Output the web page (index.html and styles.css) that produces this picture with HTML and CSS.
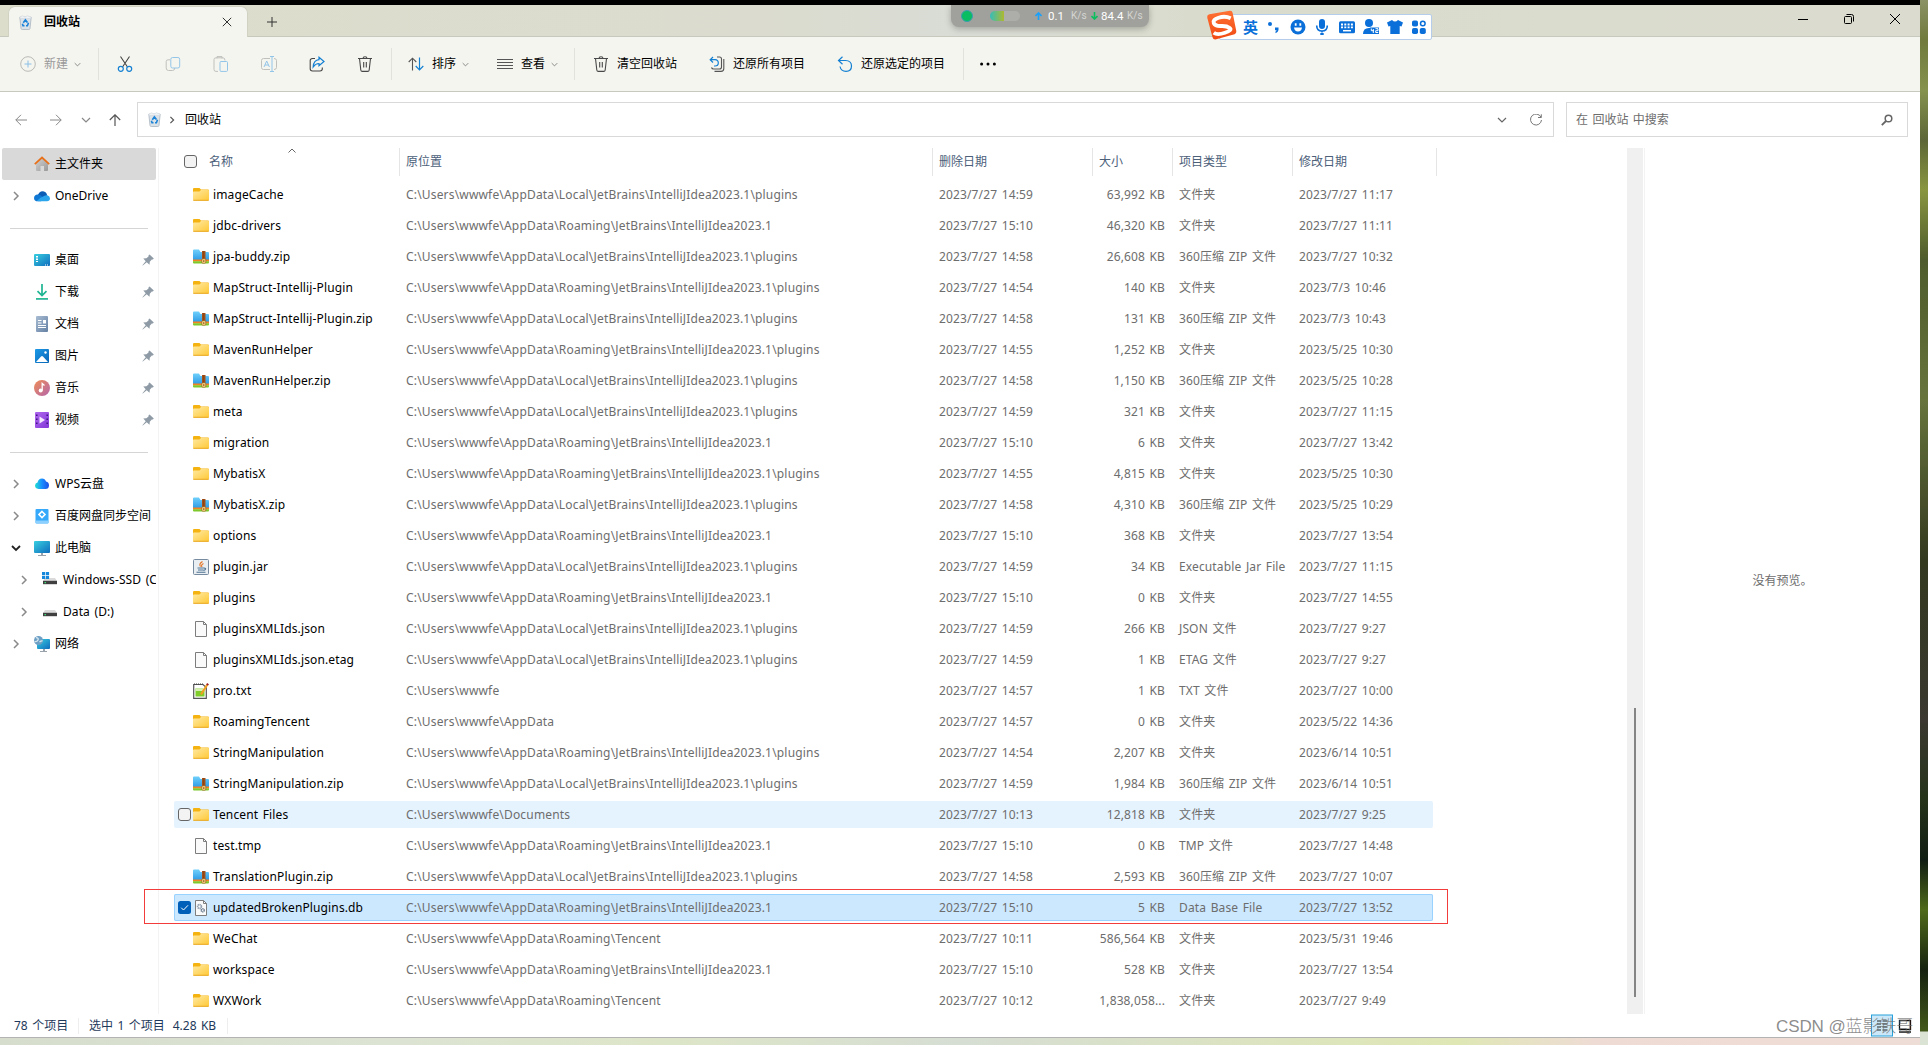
FILE: index.html
```html
<!DOCTYPE html>
<html lang="zh-CN">
<head>
    <meta charset="UTF-8">
    <title>回收站</title>
    <link rel="stylesheet" href="styles.css">
</head>
<body>
<svg class="sprite" xmlns="http://www.w3.org/2000/svg">
    <defs>
        <linearGradient id="gFolder" x1="0" y1="0" x2="1" y2="1"><stop offset="0" stop-color="#ffe9a2"/><stop offset="1" stop-color="#ffc937"/></linearGradient>
        <linearGradient id="gZip" x1="0" y1="0" x2="0" y2="1"><stop offset="0" stop-color="#6fd0fb"/><stop offset="1" stop-color="#2e9be6"/></linearGradient>
        <linearGradient id="gScreen" x1="0" y1="0" x2="1" y2="1"><stop offset="0" stop-color="#38cfe0"/><stop offset="1" stop-color="#0f6cbd"/></linearGradient>
        <linearGradient id="gDown" x1="0" y1="0" x2="0" y2="1"><stop offset="0" stop-color="#35cf8e"/><stop offset="1" stop-color="#109a94"/></linearGradient>
        <linearGradient id="gDoc" x1="0" y1="0" x2="1" y2="1"><stop offset="0" stop-color="#a9bdd3"/><stop offset="1" stop-color="#6480a3"/></linearGradient>
        <linearGradient id="gPic" x1="0" y1="0" x2="1" y2="1"><stop offset="0" stop-color="#1c9be8"/><stop offset="1" stop-color="#0864b5"/></linearGradient>
        <linearGradient id="gMusic" x1="0" y1="0" x2="1" y2="1"><stop offset="0" stop-color="#ef8d56"/><stop offset="1" stop-color="#b466ac"/></linearGradient>
        <linearGradient id="gVideo" x1="0" y1="0" x2="1" y2="1"><stop offset="0" stop-color="#b067ee"/><stop offset="1" stop-color="#8138d8"/></linearGradient>
        <linearGradient id="gHome" x1="0" y1="0" x2="1" y2="1"><stop offset="0" stop-color="#d2d2d2"/><stop offset="1" stop-color="#999"/></linearGradient>
        <linearGradient id="gWps" x1="0" y1="0" x2="1" y2="0"><stop offset="0" stop-color="#1fe0d0"/><stop offset=".5" stop-color="#1a8dff"/><stop offset="1" stop-color="#1d4fe6"/></linearGradient>
        <linearGradient id="gSogou" x1="0" y1="0" x2="0" y2="1"><stop offset="0" stop-color="#ff7033"/><stop offset="1" stop-color="#f04a12"/></linearGradient>
    </defs>

    <!-- file types -->
    <symbol id="folder" viewBox="0 0 16 16">
        <path d="M0 2Q0 1 1 1H6.500L8 2.500H15Q16 2.500 16 3.500V8H0Z" fill="#f5b312"/>
        <path d="M0 5.500Q0 4.500 1 4.500H6.500L8 3H15.200Q16 3 16 4V12.500Q16 13.500 15 13.500H1Q0 13.500 0 12.500Z" fill="url(#gFolder)"/>
        <path d="M.3 13.300h15.400" stroke="#e8a71d"/>
    </symbol>
    <symbol id="zip" viewBox="0 0 16 16">
        <path d="M0 1.500Q0 .5 1 .5H6L7.500 3H15Q16 3 16 4V11H0Z" fill="url(#gZip)"/>
        <path d="M0 10.500h16v2H0z" fill="#f58220"/>
        <path d="M0 12.300h16V13.500q0 1-1 1H1q-1 0-1-1z" fill="#7fc82b"/>
        <path d="M9 2h3.500v12H9z" fill="#a5521a"/>
        <path d="M10.700 2.500v8" stroke="#6d300b" stroke-dasharray="1 1"/>
        <rect x="8.800" y="9.800" width="4" height="4.400" rx="1" fill="#ffe08a" stroke="#8b4a14" stroke-width=".6"/>
        <rect x="10.200" y="11.300" width="1.200" height="1.500" fill="#7a3b0c"/>
    </symbol>
    <symbol id="file" viewBox="0 0 16 16">
        <path d="M2.500.5H10.500L13.500 3.500V15.500H2.500Z" fill="#fafafa" stroke="#7d7d7d"/>
        <path d="M10.500.5V3.500H13.500" fill="none" stroke="#7d7d7d"/>
    </symbol>
    <symbol id="db" viewBox="0 0 16 16">
        <path d="M2.500.5H10.500L13.500 3.500V15.500H2.500Z" fill="#fafafa" stroke="#7d7d7d"/>
        <path d="M10.500.5V3.500H13.500" fill="none" stroke="#7d7d7d"/>
        <circle cx="6.500" cy="6.500" r="1.900" fill="none" stroke="#94a2b2" stroke-width="1.700" stroke-dasharray="1.200 .4"/>
        <circle cx="9.700" cy="10.300" r="1.500" fill="none" stroke="#6f7f92" stroke-width="1.500" stroke-dasharray="1.100 .4"/>
    </symbol>
    <symbol id="jar" viewBox="0 0 16 16">
        <rect x=".5" y=".5" width="15" height="15" rx="1" fill="#e9eef3" stroke="#768b9f"/>
        <path d="M9.500 2.500Q5.500 5 7.500 7.500M10.500 4.500Q7.500 6 9 8" fill="none" stroke="#e5792b" stroke-width="1.200"/>
        <path d="M4.500 9h6.500M5 11h5.500M3.500 13.200h9M11 9.200q2.200-.2 1.500 1t-2 1" fill="none" stroke="#4e7391" stroke-width="1.100"/>
    </symbol>
    <symbol id="txt" viewBox="0 0 16 16">
        <path d="M.7 1.500H10L13.300 4.500V15.300H.7Z" fill="#fff" stroke="#555" stroke-width="1.200"/>
        <path d="M1 1h9" stroke="#444" stroke-dasharray="1 1"/>
        <path d="M2.500 5.500H10L11.500 8V13.500H2.500Z" fill="#7fcc2a"/>
        <path d="M2.500 5.500H10V8H2.500Z" fill="#d7f0b0"/>
        <path d="M8 11.500L14 2" stroke="#f0a020" stroke-width="2.200"/>
        <path d="M14 2.200L15 .7" stroke="#a01c1c" stroke-width="2.200"/>
    </symbol>

    <!-- navigation pane -->
    <symbol id="home" viewBox="0 0 16 16">
        <path d="M2 7.500L8 2L14 7.500V14Q14 15 13 15H10V10H6.500V15H3Q2 15 2 14Z" fill="url(#gHome)"/>
        <path d="M.8 8.200L8 1.500L15.200 8.200" fill="none" stroke="#e8721c" stroke-width="1.800"/>
    </symbol>
    <symbol id="onedrive" viewBox="0 0 16 16">
        <path d="M3.500 8Q5 3 9 3.200Q12.500 3.500 13.200 7.500L8 11Z" fill="#0a5cb5"/>
        <path d="M4 13.300Q0 13.300 0 9.900Q.3 6.800 3.700 6.600Q6.500 6.500 9 9.500L7 13.300Z" fill="#0f78d4"/>
        <path d="M3 12.800Q6 9.500 10 8Q12 7 13.300 7.300Q16 8 16 10.500Q15.800 13.300 13 13.300H4Z" fill="#2aa5ec"/>
    </symbol>
    <symbol id="desktop" viewBox="0 0 16 16">
        <rect y="2" width="16" height="12" rx="1" fill="url(#gScreen)"/>
        <path d="M2 4h2v1.500H2zM2 6.500h2V8H2zM2 9h2v1H2zM11 12.600h1v1h-1zM13 12.600h1v1h-1z" fill="#fff"/>
    </symbol>
    <symbol id="download" viewBox="0 0 16 16">
        <path d="M8 0V11M3.500 7.200L8 11.600L12.500 7.200" fill="none" stroke="#1fb592" stroke-width="1.700"/>
        <path d="M2 14h12v1.700H2z" fill="url(#gDown)"/>
    </symbol>
    <symbol id="document" viewBox="0 0 16 16">
        <rect x="2" width="12" height="16" rx="1" fill="url(#gDoc)"/>
        <path d="M4 4.500h3.500M4 7h3.500M4 9.500h8M4 11.500h8" stroke="#fff" stroke-width="1.100"/>
        <path d="M9 4h3v3.500H9z" fill="#fff"/>
    </symbol>
    <symbol id="picture" viewBox="0 0 16 16">
        <rect x="1" y="1" width="14" height="14" rx="1" fill="url(#gPic)"/>
        <path d="M2 14L7 8.500Q8 7.500 9 8.500L14 14Z" fill="#fff"/>
        <circle cx="11.500" cy="4.500" r="1.200" fill="#fff"/>
    </symbol>
    <symbol id="music" viewBox="0 0 16 16">
        <circle cx="8" cy="8" r="8" fill="url(#gMusic)"/>
        <circle cx="6.700" cy="10.500" r="2" fill="#fff"/>
        <path d="M8.200 10.500V3.500L10.500 5.500" fill="none" stroke="#fff" stroke-width="1.300"/>
    </symbol>
    <symbol id="video" viewBox="0 0 16 16">
        <rect x="1" width="14" height="16" rx="1" fill="url(#gVideo)"/>
        <path d="M2.800 2.500v12M13.200 2.500v12" stroke="#3d1480" stroke-width="1.500" stroke-dasharray="1.500 2.500"/>
        <path d="M5.500 4.500L11 8L5.500 11.500Z" fill="#f3e8ff"/>
    </symbol>
    <symbol id="wps" viewBox="0 0 16 16">
        <path d="M4.500 13Q1 12.500 1 9.500Q1.200 7 3.500 6.500Q4.500 2.500 8 2.500Q11 2.500 12 5.500Q15 6.200 15 9.500Q14.800 13 11.500 13Z" fill="url(#gWps)"/>
    </symbol>
    <symbol id="baidu" viewBox="0 0 16 16">
        <rect x="1.500" y="1" width="13" height="14.500" rx="1" fill="#36a9fb"/>
        <path d="M1.500 12.500h13V15h-13z" fill="#8bd0ff"/>
        <path d="M8 3.500L11 6.500L8 9.500L5 6.500Z" fill="none" stroke="#fff" stroke-width="1.600"/>
    </symbol>
    <symbol id="pc" viewBox="0 0 16 16">
        <rect y="1" width="16" height="12" rx="1" fill="url(#gScreen)"/>
        <path d="M7 13h2v2h3v1H4v-1h3z" fill="#9aa3ab"/>
    </symbol>
    <symbol id="disk" viewBox="0 0 16 16">
        <path d="M3 6h10l2 3H1z" fill="#dadada"/>
        <path d="M1 8.800h14v3.400H1z" fill="#3f3f3f"/>
        <path d="M2.500 10h1.500v1.200H2.500z" fill="#3fdc7a"/>
    </symbol>
    <symbol id="ssd" viewBox="0 0 16 16">
        <path d="M3 6h10l2 3H1z" fill="#dadada"/>
        <path d="M1 8.800h14v3.400H1z" fill="#3f3f3f"/>
        <path d="M2.500 10h1.500v1.200H2.500z" fill="#3fdc7a"/>
        <path d="M0 0h3.200v3.200H0zM3.900 0h3.200v3.200H3.900zM0 3.900h3.200v3.200H0zM3.900 3.900h3.200v3.200H3.900z" fill="#1588dc"/>
    </symbol>
    <symbol id="network" viewBox="0 0 16 16">
        <rect x="3" y="3" width="13" height="10" rx="1" fill="url(#gScreen)"/>
        <path d="M9 13h2v2h2v1H6v-1h3z" fill="#9aa3ab"/>
        <circle cx="4.500" cy="4.500" r="4.500" fill="#6d9fc4"/>
        <path d="M2 1.500q3 .5 2 2.500t-3.500 1.500M5.500 6q2-1.500 3-1" fill="none" stroke="#d5e6ef" stroke-width="1.400"/>
    </symbol>
    <symbol id="pin" viewBox="0 0 12 12">
        <path d="M7.500 .5L11.800 4.500L10.800 5.500L9.800 5.500L7.800 7.800L7.500 10.700L4.700 8.300L.8 11.600L.4 11.200L3.700 7.300L1.300 4.600L4.400 4.200L6.500 2.500L6.500 1.500Z" fill="#8e9aa5"/>
    </symbol>
    <symbol id="bin" viewBox="0 0 13 15">
        <path d="M.8 2.200H12.200L11 13.500Q10.800 14.500 9.800 14.500H3.200Q2.200 14.500 2 13.500Z" fill="#dbe2e8" stroke="#aab5bf" stroke-width=".8"/>
        <path d="M1 2L3.500 .8L6 2L8.500 .7L12 2.200V3.500H1Z" fill="#eef2f5" stroke="#cdd3d8" stroke-width=".5"/>
        <path d="M4.300 7.700L6.400 4.900L8.400 7.500M9.500 7.700L8.400 10.700H7M5.500 10.700H4L3.400 8.700" fill="none" stroke="#1b83d8" stroke-width="1.600"/>
    </symbol>

    <!-- line icons -->
    <symbol id="right" viewBox="0 0 10 10"><path d="M3 1L7 5L3 9" fill="none" stroke="currentColor" stroke-width="1.500"/></symbol>
    <symbol id="down" viewBox="0 0 10 10"><path d="M1 3L5 7L9 3" fill="none" stroke="currentColor" stroke-width="1.200"/></symbol>
    <symbol id="trash" viewBox="0 0 16 16">
        <path d="M1 2.500H15M6 2.500Q6 .7 8 .7T10 2.500M2.500 2.500L3.800 14Q4 15.400 5.300 15.400H10.700Q12 15.400 12.200 14L13.500 2.500M6.700 6V11.500M9.300 6V11.500" fill="none" stroke="#484848" stroke-width="1.100"/>
    </symbol>
</svg>

<div class="desktop">
    <div class="window">
        <header class="titlebar">
            <div class="tab">
                <svg class="tab-icon"><use href="#bin"/></svg>
                <span class="tab-title">回收站</span>
                <svg class="tab-close" viewBox="0 0 10 10"><path d="M.8.8L9.200 9.200M9.200.8L.8 9.200" stroke="#333"/></svg>
            </div>
            <svg class="new-tab" viewBox="0 0 10 10"><path d="M5 0V10M0 5H10" stroke="#333"/></svg>
            <div class="controls">
                <svg viewBox="0 0 10 10"><path d="M0 5.500H10" stroke="#000"/></svg>
                <svg viewBox="0 0 10 10"><path d="M.5 3.500Q.5 2.500 1.500 2.500H6.500Q7.500 2.500 7.500 3.500V8.500Q7.500 9.500 6.500 9.500H1.500Q.5 9.500.5 8.500ZM2.500.5H7.500Q9.500.5 9.500 2.500V7.500" fill="none" stroke="#000"/></svg>
                <svg viewBox="0 0 10 10"><path d="M0 0L10 10M10 0L0 10" stroke="#000"/></svg>
            </div>
        </header>

        <div class="toolbar">
            <div class="tool tool-new disabled">
                <svg viewBox="0 0 16 16"><circle cx="8" cy="8" r="7.300" fill="none" stroke="#b9b9b6"/><path d="M8 4.500V11.500M4.500 8H11.500" stroke="#8cc0e6"/></svg>
                <span>新建</span>
                <svg class="caret"><use href="#down"/></svg>
            </div>
            <i class="sep"></i>
            <div class="icon-tools">
                <svg viewBox="0 0 16 16"><path d="M3.500.5L10.500 11M12.500.5L5.500 11" stroke="#444" stroke-width="1.100"/><circle cx="3.800" cy="12.800" r="2.500" fill="none" stroke="#1480d2" stroke-width="1.200"/><circle cx="12.200" cy="12.800" r="2.500" fill="none" stroke="#1480d2" stroke-width="1.200"/></svg>
                <svg viewBox="0 0 16 16"><path d="M5 3.800H3Q1.200 3.800 1.200 5.500V12Q1.200 14.500 3.500 14.500H7.500Q9.800 14.500 9.800 12" fill="none" stroke="#c0c0bd"/><rect x="5.800" y="1.500" width="8.900" height="10.500" rx="1.800" fill="none" stroke="#93c5e8"/></svg>
                <svg viewBox="0 0 16 16"><path d="M5 15.400H3Q1 15.400 1 13.500V3.500Q1 1.800 3 1.800H10Q12 1.800 12 4.500M4 2.500V.6H9V2.500" fill="none" stroke="#c0c0bd"/><rect x="7" y="5.500" width="7.500" height="9.900" rx="1" fill="none" stroke="#93c5e8"/></svg>
                <svg viewBox="0 0 16 16"><path d="M9 2.500H2.500Q.5 2.500.5 4.500V11.500Q.5 13.500 2.500 13.500H9M13 2.500Q15.500 2.500 15.500 4.500V11.500Q15.500 13.500 13 13.500" fill="none" stroke="#c0c0bd"/><path d="M3 11L5.700 5L8.400 11M4 9H7.500M9 .5H13M11 .5V15.500M9 15.500H13" fill="none" stroke="#93c5e8"/></svg>
                <svg viewBox="0 0 16 16"><path d="M6 2.500H3.500Q1.200 2.500 1.200 4.500V12.800Q1.200 15 3.500 15H11Q13.300 15 13.300 12.800V11.500" fill="none" stroke="#444" stroke-width="1.100"/><path d="M10 1.300L15 5.500L10 9.800V7.500Q6.500 7.500 4.200 10.800Q4.700 4.200 10 3.700Z" fill="none" stroke="#1480d2" stroke-width="1.200"/></svg>
                <svg><use href="#trash"/></svg>
            </div>
            <i class="sep"></i>
            <div class="tool tool-sort">
                <svg viewBox="0 0 16 16"><path d="M4.500 14.500V2.500M.7 6L4.500 2.200L8.300 6" fill="none" stroke="#555" stroke-width="1.100"/><path d="M11.500 1.500V13.500M7.700 10L11.500 13.800L15.300 10" fill="none" stroke="#1480d2" stroke-width="1.200"/></svg>
                <span>排序</span>
                <svg class="caret"><use href="#down"/></svg>
            </div>
            <div class="tool tool-view">
                <svg viewBox="0 0 16 16"><path d="M0 3.500H16M0 6.500H16M0 9.500H16M0 12.500H16" stroke="#555"/></svg>
                <span>查看</span>
                <svg class="caret"><use href="#down"/></svg>
            </div>
            <i class="sep"></i>
            <div class="tool tool-empty">
                <svg><use href="#trash"/></svg>
                <span>清空回收站</span>
            </div>
            <div class="tool tool-all">
                <svg viewBox="0 0 16 16"><path d="M8 1H10.500Q12.500 1 12.500 3V11Q12.500 13 10.500 13H4.500Q3 13 2.500 11.500M14.800 3V12.500Q14.800 15.400 12 15.400H5.500" fill="none" stroke="#555" stroke-width="1.100"/><path d="M1.500 3.700H6Q9.300 4 9.300 7T6 10H5M4 1L1.200 3.700L4 6.500" fill="none" stroke="#1480d2" stroke-width="1.200"/></svg>
                <span>还原所有项目</span>
            </div>
            <div class="tool tool-selected">
                <svg viewBox="0 0 16 16"><path d="M1.500 4.500H8.500Q14.500 4.700 14.500 10T9 15.300Q4 15.300 3 10.500M5.500.8L1.500 4.500L5.500 8.200" fill="none" stroke="#1480d2" stroke-width="1.200"/></svg>
                <span>还原选定的项目</span>
            </div>
            <i class="sep"></i>
            <svg class="more" viewBox="0 0 16 4"><circle cx="1.600" cy="2" r="1.500"/><circle cx="8" cy="2" r="1.500"/><circle cx="14.400" cy="2" r="1.500"/></svg>
        </div>

        <div class="navbar">
            <div class="nav-buttons">
                <svg viewBox="0 0 12 12"><path d="M12 6H.8M6 .8L.8 6L6 11.200" fill="none" stroke="#888"/></svg>
                <svg viewBox="0 0 12 12"><path d="M0 6H11.200M6 .8L11.200 6L6 11.200" fill="none" stroke="#888"/></svg>
                <svg class="recent"><use href="#down"/></svg>
                <svg viewBox="0 0 12 12"><path d="M6 12V.8M.8 6L6 .8L11.200 6" fill="none" stroke="#555" stroke-width="1.200"/></svg>
            </div>
            <div class="address">
                <svg class="address-icon"><use href="#bin"/></svg>
                <svg class="crumb"><use href="#right"/></svg>
                <span>回收站</span>
                <svg class="dropdown"><use href="#down"/></svg>
                <svg class="refresh" viewBox="0 0 12 12"><path d="M11 3.200A5.500 5.500 0 1 0 11.500 6M11.300.3V3.500H8" fill="none" stroke="#777"/></svg>
            </div>
            <div class="search">
                <span>在 回收站 中搜索</span>
                <svg viewBox="0 0 12 12"><circle cx="7.500" cy="4.500" r="3.300" fill="none" stroke="#666" stroke-width="1.500"/><path d="M5 7L.8 11.200" stroke="#666" stroke-width="1.800"/></svg>
            </div>
        </div>

        <main class="content">
            <nav class="sidebar">
                <div class="item active"><i class="arrow"></i><svg class="icon"><use href="#home"/></svg><span>主文件夹</span></div>
                <div class="item"><svg class="arrow"><use href="#right"/></svg><svg class="icon"><use href="#onedrive"/></svg><span>OneDrive</span></div>
                <hr>
                <div class="item"><i class="arrow"></i><svg class="icon"><use href="#desktop"/></svg><span>桌面</span><svg class="pin"><use href="#pin"/></svg></div>
                <div class="item"><i class="arrow"></i><svg class="icon"><use href="#download"/></svg><span>下载</span><svg class="pin"><use href="#pin"/></svg></div>
                <div class="item"><i class="arrow"></i><svg class="icon"><use href="#document"/></svg><span>文档</span><svg class="pin"><use href="#pin"/></svg></div>
                <div class="item"><i class="arrow"></i><svg class="icon"><use href="#picture"/></svg><span>图片</span><svg class="pin"><use href="#pin"/></svg></div>
                <div class="item"><i class="arrow"></i><svg class="icon"><use href="#music"/></svg><span>音乐</span><svg class="pin"><use href="#pin"/></svg></div>
                <div class="item"><i class="arrow"></i><svg class="icon"><use href="#video"/></svg><span>视频</span><svg class="pin"><use href="#pin"/></svg></div>
                <hr>
                <div class="item"><svg class="arrow"><use href="#right"/></svg><svg class="icon"><use href="#wps"/></svg><span>WPS云盘</span></div>
                <div class="item"><svg class="arrow"><use href="#right"/></svg><svg class="icon"><use href="#baidu"/></svg><span>百度网盘同步空间</span></div>
                <div class="item"><svg class="arrow open" viewBox="0 0 10 10"><path d="M1 3L5 7L9 3" fill="none" stroke="#222" stroke-width="1.800"/></svg><svg class="icon"><use href="#pc"/></svg><span>此电脑</span></div>
                <div class="item child"><svg class="arrow"><use href="#right"/></svg><svg class="icon"><use href="#ssd"/></svg><span>Windows-SSD (C:)</span></div>
                <div class="item child"><svg class="arrow"><use href="#right"/></svg><svg class="icon"><use href="#disk"/></svg><span>Data (D:)</span></div>
                <div class="item"><svg class="arrow"><use href="#right"/></svg><svg class="icon"><use href="#network"/></svg><span>网络</span></div>
            </nav>

            <section class="files">
                <div class="head">
                    <div class="head-name"><i class="checkbox"></i>名称<svg class="sorted" viewBox="0 0 8 5"><path d="M.5 4.500L4 1L7.500 4.500" fill="none" stroke="#666"/></svg></div>
                    <div>原位置</div>
                    <div>删除日期</div>
                    <div>大小</div>
                    <div>项目类型</div>
                    <div>修改日期</div>
                </div>
                <div class="row"><b><svg><use href="#folder"/></svg>imageCache</b><span>C:\Users\wwwfe\AppData\Local\JetBrains\IntelliJIdea2023.1\plugins</span><span>2023/7/27 14:59</span><span>63,992 KB</span><span>文件夹</span><span>2023/7/27 11:17</span></div>
                <div class="row"><b><svg><use href="#folder"/></svg>jdbc-drivers</b><span>C:\Users\wwwfe\AppData\Roaming\JetBrains\IntelliJIdea2023.1</span><span>2023/7/27 15:10</span><span>46,320 KB</span><span>文件夹</span><span>2023/7/27 11:11</span></div>
                <div class="row"><b><svg><use href="#zip"/></svg>jpa-buddy.zip</b><span>C:\Users\wwwfe\AppData\Local\JetBrains\IntelliJIdea2023.1\plugins</span><span>2023/7/27 14:58</span><span>26,608 KB</span><span>360压缩 ZIP 文件</span><span>2023/7/27 10:32</span></div>
                <div class="row"><b><svg><use href="#folder"/></svg>MapStruct-Intellij-Plugin</b><span>C:\Users\wwwfe\AppData\Roaming\JetBrains\IntelliJIdea2023.1\plugins</span><span>2023/7/27 14:54</span><span>140 KB</span><span>文件夹</span><span>2023/7/3 10:46</span></div>
                <div class="row"><b><svg><use href="#zip"/></svg>MapStruct-Intellij-Plugin.zip</b><span>C:\Users\wwwfe\AppData\Local\JetBrains\IntelliJIdea2023.1\plugins</span><span>2023/7/27 14:58</span><span>131 KB</span><span>360压缩 ZIP 文件</span><span>2023/7/3 10:43</span></div>
                <div class="row"><b><svg><use href="#folder"/></svg>MavenRunHelper</b><span>C:\Users\wwwfe\AppData\Roaming\JetBrains\IntelliJIdea2023.1\plugins</span><span>2023/7/27 14:55</span><span>1,252 KB</span><span>文件夹</span><span>2023/5/25 10:30</span></div>
                <div class="row"><b><svg><use href="#zip"/></svg>MavenRunHelper.zip</b><span>C:\Users\wwwfe\AppData\Local\JetBrains\IntelliJIdea2023.1\plugins</span><span>2023/7/27 14:58</span><span>1,150 KB</span><span>360压缩 ZIP 文件</span><span>2023/5/25 10:28</span></div>
                <div class="row"><b><svg><use href="#folder"/></svg>meta</b><span>C:\Users\wwwfe\AppData\Local\JetBrains\IntelliJIdea2023.1\plugins</span><span>2023/7/27 14:59</span><span>321 KB</span><span>文件夹</span><span>2023/7/27 11:15</span></div>
                <div class="row"><b><svg><use href="#folder"/></svg>migration</b><span>C:\Users\wwwfe\AppData\Roaming\JetBrains\IntelliJIdea2023.1</span><span>2023/7/27 15:10</span><span>6 KB</span><span>文件夹</span><span>2023/7/27 13:42</span></div>
                <div class="row"><b><svg><use href="#folder"/></svg>MybatisX</b><span>C:\Users\wwwfe\AppData\Roaming\JetBrains\IntelliJIdea2023.1\plugins</span><span>2023/7/27 14:55</span><span>4,815 KB</span><span>文件夹</span><span>2023/5/25 10:30</span></div>
                <div class="row"><b><svg><use href="#zip"/></svg>MybatisX.zip</b><span>C:\Users\wwwfe\AppData\Local\JetBrains\IntelliJIdea2023.1\plugins</span><span>2023/7/27 14:58</span><span>4,310 KB</span><span>360压缩 ZIP 文件</span><span>2023/5/25 10:29</span></div>
                <div class="row"><b><svg><use href="#folder"/></svg>options</b><span>C:\Users\wwwfe\AppData\Roaming\JetBrains\IntelliJIdea2023.1</span><span>2023/7/27 15:10</span><span>368 KB</span><span>文件夹</span><span>2023/7/27 13:54</span></div>
                <div class="row"><b><svg><use href="#jar"/></svg>plugin.jar</b><span>C:\Users\wwwfe\AppData\Local\JetBrains\IntelliJIdea2023.1\plugins</span><span>2023/7/27 14:59</span><span>34 KB</span><span>Executable Jar File</span><span>2023/7/27 11:15</span></div>
                <div class="row"><b><svg><use href="#folder"/></svg>plugins</b><span>C:\Users\wwwfe\AppData\Roaming\JetBrains\IntelliJIdea2023.1</span><span>2023/7/27 15:10</span><span>0 KB</span><span>文件夹</span><span>2023/7/27 14:55</span></div>
                <div class="row"><b><svg><use href="#file"/></svg>pluginsXMLIds.json</b><span>C:\Users\wwwfe\AppData\Local\JetBrains\IntelliJIdea2023.1\plugins</span><span>2023/7/27 14:59</span><span>266 KB</span><span>JSON 文件</span><span>2023/7/27 9:27</span></div>
                <div class="row"><b><svg><use href="#file"/></svg>pluginsXMLIds.json.etag</b><span>C:\Users\wwwfe\AppData\Local\JetBrains\IntelliJIdea2023.1\plugins</span><span>2023/7/27 14:59</span><span>1 KB</span><span>ETAG 文件</span><span>2023/7/27 9:27</span></div>
                <div class="row"><b><svg><use href="#txt"/></svg>pro.txt</b><span>C:\Users\wwwfe</span><span>2023/7/27 14:57</span><span>1 KB</span><span>TXT 文件</span><span>2023/7/27 10:00</span></div>
                <div class="row"><b><svg><use href="#folder"/></svg>RoamingTencent</b><span>C:\Users\wwwfe\AppData</span><span>2023/7/27 14:57</span><span>0 KB</span><span>文件夹</span><span>2023/5/22 14:36</span></div>
                <div class="row"><b><svg><use href="#folder"/></svg>StringManipulation</b><span>C:\Users\wwwfe\AppData\Roaming\JetBrains\IntelliJIdea2023.1\plugins</span><span>2023/7/27 14:54</span><span>2,207 KB</span><span>文件夹</span><span>2023/6/14 10:51</span></div>
                <div class="row"><b><svg><use href="#zip"/></svg>StringManipulation.zip</b><span>C:\Users\wwwfe\AppData\Local\JetBrains\IntelliJIdea2023.1\plugins</span><span>2023/7/27 14:59</span><span>1,984 KB</span><span>360压缩 ZIP 文件</span><span>2023/6/14 10:51</span></div>
                <div class="row hover"><b><i class="checkbox"></i><svg><use href="#folder"/></svg>Tencent Files</b><span>C:\Users\wwwfe\Documents</span><span>2023/7/27 10:13</span><span>12,818 KB</span><span>文件夹</span><span>2023/7/27 9:25</span></div>
                <div class="row"><b><svg><use href="#file"/></svg>test.tmp</b><span>C:\Users\wwwfe\AppData\Roaming\JetBrains\IntelliJIdea2023.1</span><span>2023/7/27 15:10</span><span>0 KB</span><span>TMP 文件</span><span>2023/7/27 14:48</span></div>
                <div class="row"><b><svg><use href="#zip"/></svg>TranslationPlugin.zip</b><span>C:\Users\wwwfe\AppData\Local\JetBrains\IntelliJIdea2023.1\plugins</span><span>2023/7/27 14:58</span><span>2,593 KB</span><span>360压缩 ZIP 文件</span><span>2023/7/27 10:07</span></div>
                <div class="row selected"><b><svg class="checked" viewBox="0 0 13 13"><rect width="13" height="13" rx="2.500" fill="#005fb8"/><path d="M3.200 6.700L5.500 9L10 4.300" fill="none" stroke="#fff"/></svg><svg><use href="#db"/></svg>updatedBrokenPlugins.db</b><span>C:\Users\wwwfe\AppData\Roaming\JetBrains\IntelliJIdea2023.1</span><span>2023/7/27 15:10</span><span>5 KB</span><span>Data Base File</span><span>2023/7/27 13:52</span></div>
                <div class="row"><b><svg><use href="#folder"/></svg>WeChat</b><span>C:\Users\wwwfe\AppData\Roaming\Tencent</span><span>2023/7/27 10:11</span><span>586,564 KB</span><span>文件夹</span><span>2023/5/31 19:46</span></div>
                <div class="row"><b><svg><use href="#folder"/></svg>workspace</b><span>C:\Users\wwwfe\AppData\Roaming\JetBrains\IntelliJIdea2023.1</span><span>2023/7/27 15:10</span><span>528 KB</span><span>文件夹</span><span>2023/7/27 13:54</span></div>
                <div class="row"><b><svg><use href="#folder"/></svg>WXWork</b><span>C:\Users\wwwfe\AppData\Roaming\Tencent</span><span>2023/7/27 10:12</span><span>1,838,058...</span><span>文件夹</span><span>2023/7/27 9:49</span></div>
            </section>

            <div class="scrollbar"><div class="thumb"></div></div>
            <aside class="preview">没有预览。</aside>
        </main>

        <footer class="status">
            <span class="count">78 个项目</span>
            <span class="chosen">选中 1 个项目</span>
            <span class="bytes">4.28 KB</span>
            <div class="views">
                <svg class="details" viewBox="0 0 22 22"><rect x=".5" y=".5" width="21" height="21" fill="#cce8f8" stroke="#26a0da"/><path d="M6 6.500h4M11.500 6.500h5M6 9.500h4M11.500 9.500h5M6 12.500h4M11.500 12.500h5M6 15.500h4M11.500 15.500h5" stroke="#222"/></svg>
                <svg class="thumbs" viewBox="0 0 14 14"><path d="M1.500 1.500h11v9h-11zM1 13h12" fill="none" stroke="#111" stroke-width="1.300"/></svg>
            </div>
        </footer>
        <div class="taskbar"></div>
    </div>
    <div class="wallpaper"></div>
</div>

<!-- floating widgets on top of the window -->
<div class="netspeed">
    <i class="dot"></i>
    <i class="meter"></i>
    <svg viewBox="0 0 7 8"><path d="M3.500 8V2M.5 4L3.500 1L6.500 4" fill="none" stroke="#18a0fb" stroke-width="1.600"/></svg>
    <span class="up">0.1</span><small>K/s</small>
    <svg class="arrow-down" viewBox="0 0 7 8"><path d="M3.500 0V6M.5 4L3.500 7L6.500 4" fill="none" stroke="#0bbf5f" stroke-width="1.600"/></svg>
    <span class="dl">84.4</span><small>K/s</small>
</div>

<div class="ime">
    <span>英</span>
    <svg viewBox="0 0 16 16"><circle cx="4" cy="5" r="2"/><path d="M9 8.500h3.500V11Q12 13.500 9.500 14.300V12.500Q10.500 12 10.500 11.300H9Z"/></svg>
    <svg viewBox="0 0 16 16"><circle cx="8" cy="8" r="7.500"/><path d="M4 8.500h8Q11.500 12.500 8 12.500T4 8.500ZM4.800 4.300h1.800v2.500H4.800zM9.400 4.300h1.800v2.500H9.400z" fill="#fff"/></svg>
    <svg viewBox="0 0 16 16"><rect x="5" width="6" height="10" rx="3"/><path d="M2.700 6.500Q2.700 12 8 12T13.300 6.500M8 12V13.500" fill="none" stroke="#0a6fd8" stroke-width="1.600"/><path d="M6.300 14h3.400v2H6.300z"/></svg>
    <svg viewBox="0 0 16 16"><rect y="2.300" width="16" height="12" rx="1.500"/><path d="M2 5.500h12M2 8.300h12" stroke="#fff" stroke-width="1.800" stroke-dasharray="2 1.300"/><path d="M4 11.700h8" stroke="#fff" stroke-width="1.500"/></svg>
    <svg viewBox="0 0 16 16"><circle cx="6" cy="4" r="4"/><path d="M0 15Q0 9 6 9H7V15Z"/><path d="M6.800 8.500H16V15H6.800Z"/><path d="M8.300 9.500V11.700H11M10.300 10V14M12.500 9.700H15V11.700H12.700V13.500H15.200" fill="none" stroke="#fff"/></svg>
    <svg viewBox="0 0 16 16"><path d="M5 1Q8 4 11 1L16 3.500L14.500 7.500L12.700 7V15H3.300V7L1.500 7.500L0 3.500Z"/></svg>
    <svg viewBox="0 0 16 16"><rect x="1" y="1.500" width="6" height="6" rx="1.800"/><rect x="1" y="9" width="6" height="6" rx="1.800"/><rect x="8.800" y="9" width="6" height="6" rx="1.800"/><circle cx="11.800" cy="4.500" r="2.300" fill="none" stroke="#0a6fd8" stroke-width="1.500"/></svg>
</div>
<svg class="sogou" viewBox="0 0 32 32">
    <path d="M3 4.500L24 .8Q26.500.5 27 3L30.800 22Q31 24.300 29 25L10 30.300Q7 31 6.200 28L.8 8Q.5 5 3 4.500Z" fill="url(#gSogou)"/>
    <path d="M25 8.500Q19 5.800 12.500 8T7.500 13.500T15 16.500T24 18.500T19 23.500T7.500 23.500" fill="none" stroke="#fff" stroke-width="4"/>
</svg>

<div class="highlight"></div>
<div class="watermark">CSDN @蓝影铁哥</div>
</body>
</html>
```
FILE: styles.css
```css
:root {
    --chrome: #dbdccf;
    --surface: #f5f5f0;
    --line: #c8c9be;
    --box: #d9d9d9;
    --muted: #6d6d6d;
    --head: #4c607a;
    --blue: #0a6fd8;
}

* {
    box-sizing: border-box;
}

body {
    margin: 0;
    height: 1045px;
    overflow: hidden;
    background: #000;
    color: #000;
    font: 12px/16px "Noto Sans", "Noto Sans CJK SC", sans-serif;
    word-spacing: 1.3px;
    white-space: nowrap;
}

svg {
    display: block;
    flex: none;
}

.sprite {
    position: absolute;
    width: 0;
    height: 0;
}

.desktop {
    display: flex;
    height: 1045px;
}

.window {
    width: 1920px;
    padding-top: 5px;
    display: flex;
    flex-direction: column;
}

.wallpaper {
    width: 8px;
    background: linear-gradient(#8b9265 0, #6f7a3c 40px, #85924d 90px, #5c6637 140px, #89963f 190px, #4e5b2c 260px, #67743c 400px, #33391f 560px, #3a3830 720px, #25331a 800px, #101d12 860px, #4f6a1a 910px, #16220f 970px, #42581a 1031px, #dbe3d5 1032px);
}

/* title bar */
.titlebar {
    display: flex;
    height: 32px;
    padding-left: 8px;
    background: linear-gradient(90deg, #dcddcb, var(--chrome) 40%, #d9dcd5 50%, #d9dccd 62%, #dbdccf);
    border-bottom: 1px solid var(--line);
}

.tab {
    display: flex;
    align-items: center;
    width: 240px;
    height: 31px;
    padding: 0 15px 0 10px;
    margin-top: 1px;
    background: var(--surface);
    border: 1px solid #d1d2c2;
    border-bottom: 0;
    border-radius: 7px 7px 0 0;
}

.tab-icon {
    width: 13px;
    height: 15px;
}

.tab-title {
    margin-left: 12px;
    font-weight: 700;
}

.tab-close {
    width: 10px;
    height: 10px;
    margin-left: auto;
}

.new-tab {
    width: 10px;
    height: 10px;
    margin: 12px 0 0 19px;
}

.controls {
    display: flex;
    gap: 36px;
    margin: 9px 20px 0 auto;
}

.controls svg {
    width: 10px;
    height: 10px;
}

/* command bar */
.toolbar {
    display: flex;
    align-items: center;
    height: 55px;
    background: var(--surface);
    border-bottom: 1px solid var(--line);
}

.tool {
    display: flex;
    align-items: center;
    gap: 8px;
}

.tool svg {
    width: 16px;
    height: 16px;
}

.tool .caret {
    width: 7px;
    height: 7px;
    margin-left: -2px;
    color: #777;
}

.disabled {
    color: #999;
}

.sep {
    width: 1px;
    height: 32px;
    background: #e2e2dd;
}

.icon-tools {
    display: flex;
    gap: 32px;
    padding: 0 18px;
}

.icon-tools svg {
    width: 16px;
    height: 16px;
}

.tool-new {
    width: 98px;
    padding-left: 20px;
}

.tool-sort {
    width: 89px;
    padding-left: 16px;
}

.tool-view {
    width: 93px;
    padding-left: 16px;
}

.tool-empty {
    width: 115px;
    padding-left: 18px;
}

.tool-all {
    width: 128px;
    padding-left: 19px;
}

.tool-selected {
    width: 145px;
    padding-left: 19px;
}

.more {
    width: 16px;
    height: 4px;
    margin-left: 16px;
}

/* address bar */
.navbar {
    display: flex;
    align-items: center;
    height: 56px;
    padding: 0 12px 1px 15px;
    background: #fff;
}

.nav-buttons {
    display: flex;
    align-items: center;
    width: 122px;
}

.nav-buttons svg {
    width: 12px;
    height: 12px;
    margin-right: 23px;
}

.nav-buttons .recent {
    width: 10px;
    height: 10px;
    margin: 0 18px 0 -4px;
    color: #888;
}

.address,
.search {
    display: flex;
    align-items: center;
    height: 35px;
    border: 1px solid var(--box);
}

.address {
    flex: 1;
    padding: 0 11px 0 10px;
}

.address-icon {
    width: 13px;
    height: 15px;
}

.crumb {
    width: 8px;
    height: 8px;
    margin: 0 9px 0 7px;
    color: #555;
}

.dropdown {
    width: 10px;
    height: 10px;
    margin-left: auto;
    color: #666;
}

.refresh {
    width: 12px;
    height: 12px;
    margin-left: 23px;
}

.search {
    width: 342px;
    margin-left: 12px;
    padding: 0 14px 0 9px;
    color: var(--muted);
}

.search svg {
    width: 12px;
    height: 12px;
    margin-left: auto;
}

/* content area */
.content {
    display: flex;
    height: 866px;
    background: #fff;
}

.sidebar {
    width: 159px;
    padding-left: 2px;
    border-right: 1px solid #f3f3f3;
}

.item {
    display: flex;
    align-items: center;
    width: 154px;
    height: 32px;
    padding-left: 9px;
    overflow: hidden;
}

.item.active {
    background: #d9d9d9;
    border-radius: 2px;
}

.item.child {
    padding-left: 17px;
    letter-spacing: .1px;
}

.item.child .icon {
    margin-left: 13px;
}

.item.child .icon + span {
    margin-left: 5px;
}

.arrow {
    width: 10px;
    height: 10px;
    flex: none;
    color: #8a8a8a;
}

.icon {
    width: 16px;
    height: 16px;
    margin-left: 13px;
}

.icon + span {
    margin-left: 5px;
}

.pin {
    width: 12px;
    height: 12px;
    margin: 0 2px 0 auto;
}

.sidebar hr {
    width: 138px;
    height: 1px;
    margin: 16px 0 15px 8px;
    border: 0;
    background: #d5d5d5;
}

.files {
    width: 1468px;
    padding-left: 15px;
}

.head {
    display: grid;
    grid-template-columns: 225px 533px 160px 80px 120px 145px;
    height: 28px;
    margin-bottom: 5px;
    line-height: 27px;
    color: var(--head);
}

.head > div {
    padding-left: 6px;
    border-left: 1px solid #e5e5e5;
}

.head > .head-name {
    position: relative;
    display: flex;
    align-items: center;
    height: 27px;
    padding-left: 10px;
    border-left: 0;
}

.head > div:last-child {
    border-right: 1px solid #e5e5e5;
}

.sorted {
    position: absolute;
    left: 114px;
    top: 0;
    width: 8px;
    height: 5px;
}

.checkbox {
    width: 13px;
    height: 13px;
    border: 1px solid #666;
    border-radius: 3px;
    background: #f3f3f3;
}

.head .checkbox {
    margin-right: 12px;
}

.row {
    display: grid;
    grid-template-columns: 232px 533px 160px 66px 120px 1fr;
    width: 1259px;
    height: 27px;
    margin-bottom: 4px;
    border-radius: 2px;
    line-height: 27px;
    color: var(--muted);
    letter-spacing: .13px;
}

.row b {
    display: flex;
    align-items: center;
    justify-content: flex-start;
    padding-left: 19px;
    color: #000;
    font-weight: 400;
}

.row b svg {
    width: 16px;
    height: 16px;
    margin-right: 4px;
}

.row .checkbox,
.row b .checked {
    width: 13px;
    height: 13px;
    margin: 0 2px 0 -15px;
}

.row span:nth-child(2) {
    letter-spacing: .175px;
}

.row span:nth-child(4) {
    text-align: right;
}

.row span:nth-child(5) {
    padding-left: 14px;
    margin-right: -14px;
}

.row span:nth-child(6) {
    padding-left: 14px;
}

.row.hover {
    background: #e5f3ff;
}

.row.selected {
    background: #cce8ff;
    box-shadow: inset 0 0 0 1px #99d1ff;
}

.scrollbar {
    width: 16px;
    padding: 560px 0 0 7px;
    background: #f0f0f0;
}

.thumb {
    width: 2px;
    height: 289px;
    background: #858585;
}

.preview {
    display: flex;
    align-items: center;
    justify-content: center;
    flex: 1;
    margin-left: 1px;
    border-left: 1px solid #f3f3f3;
    color: var(--muted);
}

/* status bar and taskbar edge */
.status {
    display: flex;
    align-items: center;
    height: 24px;
    padding-left: 14px;
    background: #fff;
    border-bottom: 1px solid #b3b3b3;
    color: #1e395b;
}

.count {
    width: 65px;
    border-right: 1px solid #eee;
}

.chosen {
    margin-left: 10px;
}

.bytes {
    width: 55px;
    margin-left: 8px;
    border-right: 1px solid #eee;
}

.views {
    display: flex;
    align-items: center;
    margin: 0 8px 0 auto;
}

.details {
    width: 22px;
    height: 23px;
}

.thumbs {
    width: 14px;
    height: 14px;
    margin-left: 5px;
}

.taskbar {
    height: 7px;
    background: linear-gradient(90deg, #d6ddcd, #dce3d3 20%, #dde5c8 35%, #d6ddd3 50%, #dde5bb 70%, #dfe7b5 76%, #eedcd4 83%, #eedcd6);
}

/* network speed widget */
.netspeed {
    position: absolute;
    left: 951px;
    top: 5px;
    display: flex;
    align-items: center;
    width: 198px;
    height: 22px;
    padding-left: 10px;
    border-radius: 0 0 8px 8px;
    background: #a0a19c;
    box-shadow: 0 2px 6px rgba(0, 0, 0, .25);
    color: #fff;
    font-family: Roboto, sans-serif;
    font-size: 11.5px;
}

.dot {
    width: 12px;
    height: 12px;
    border-radius: 50%;
    background: #08bd62;
    border: 1px solid #3e9bb0;
}

.meter {
    width: 30px;
    height: 10px;
    margin: 0 15px 0 17px;
    border-radius: 5px;
    background: linear-gradient(90deg, #36bdb9, #adb92f 14px, #adaeaa 14px);
}

.netspeed svg {
    width: 7px;
    height: 8px;
}

.up {
    width: 23px;
    margin-left: 6px;
}

.netspeed small {
    width: 14px;
    font-size: 10px;
    color: #d5d5d3;
}

.netspeed .arrow-down {
    margin-left: 6px;
}

.dl {
    width: 26px;
    margin-left: 3px;
}

/* input method bar */
.ime {
    position: absolute;
    left: 1219px;
    top: 14px;
    display: flex;
    align-items: center;
    gap: 8px;
    width: 213px;
    height: 26px;
    padding-left: 23px;
    background: #fff;
    border: 1px solid #b5cdea;
    border-radius: 2px;
    color: var(--blue);
    font-size: 15px;
    font-weight: 700;
}

.ime svg {
    width: 16px;
    height: 16px;
    margin-right: .2px;
    fill: var(--blue);
}

.sogou {
    position: absolute;
    left: 1206px;
    top: 10px;
    width: 32px;
    height: 31px;
}

/* marker around the selected row */
.highlight {
    position: absolute;
    left: 144px;
    top: 889px;
    width: 1304px;
    height: 35px;
    border: 1px solid #f23b3b;
}

.watermark {
    position: absolute;
    left: 1776px;
    top: 1015px;
    color: rgba(110, 110, 110, .8);
    font: 300 17px/24px "Liberation Sans", "Noto Sans CJK SC", sans-serif;
    word-spacing: 0;
    letter-spacing: -.1px;
}
```
